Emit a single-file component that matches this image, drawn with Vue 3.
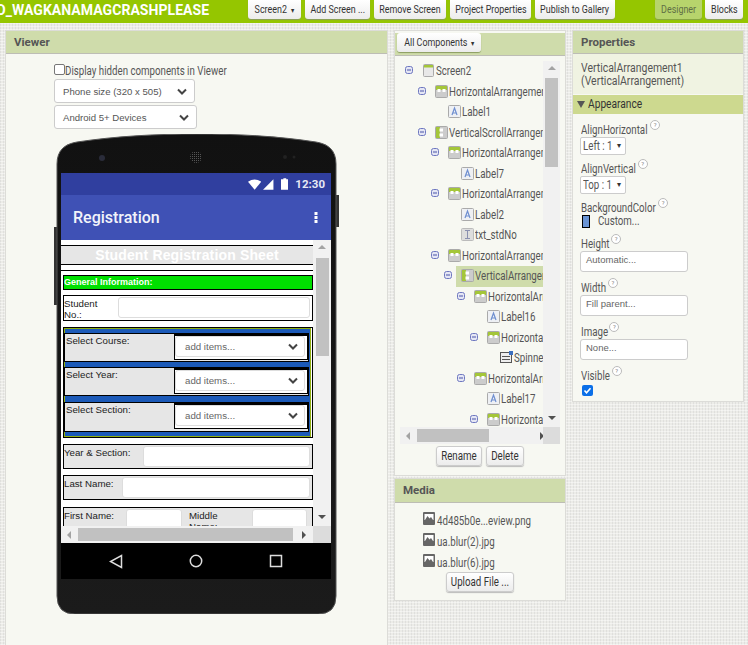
<script setup>
const tree = [
  { d: 0, i: 'screen', t: 'Screen2', m: true },
  { d: 1, i: 'h', t: 'HorizontalArrangement1', m: true },
  { d: 2, i: 'label', t: 'Label1' },
  { d: 1, i: 'v', t: 'VerticalScrollArrangement1', m: true },
  { d: 2, i: 'h', t: 'HorizontalArrangement2', m: true },
  { d: 3, i: 'label', t: 'Label7' },
  { d: 2, i: 'h', t: 'HorizontalArrangement3', m: true },
  { d: 3, i: 'label', t: 'Label2' },
  { d: 3, i: 'text', t: 'txt_stdNo' },
  { d: 2, i: 'h', t: 'HorizontalArrangement4', m: true },
  { d: 3, i: 'v', t: 'VerticalArrangement1', m: true, sel: true },
  { d: 4, i: 'h', t: 'HorizontalArrangement5', m: true },
  { d: 5, i: 'label', t: 'Label16' },
  { d: 5, i: 'h', t: 'HorizontalArrangement6', m: true },
  { d: 6, i: 'spin', t: 'Spinner1' },
  { d: 4, i: 'h', t: 'HorizontalArrangement7', m: true },
  { d: 5, i: 'label', t: 'Label17' },
  { d: 5, i: 'h', t: 'HorizontalArrangement8', m: true }
]
const selects = ['Select Course:', 'Select Year:', 'Select Section:']
const media = ['4d485b0e...eview.png', 'ua.blur(2).jpg', 'ua.blur(6).jpg']
const boxes = [
  { l: 'Height', v: 'Automatic...', w: 37 },
  { l: 'Width', v: 'Fill parent...', w: 33 },
  { l: 'Image', v: 'None...', w: 36 }
]
const rowIndent = (d) => ({ paddingLeft: 5 + 13 * d + 'px' })
const tuck = (w) => ({ marginRight: -Math.round(w * 0.19) + 'px' })
</script>

<template>
  <div class="page">
    <header class="topbar">
      <div class="title">O_WAGKANAMAGCRASHPLEASE</div>
      <div class="tools">
        <button class="tb w53"><span class="cc">Screen2 <span class="caret">▾</span></span></button>
        <button class="tb w64"><span class="cc">Add Screen ...</span></button>
        <button class="tb w73"><span class="cc">Remove Screen</span></button>
        <button class="tb w81"><span class="cc">Project Properties</span></button>
        <button class="tb w80"><span class="cc">Publish to Gallery</span></button>
      </div>
      <div class="modes">
        <button class="tb on w47"><span class="cc">Designer</span></button>
        <button class="tb w38"><span class="cc">Blocks</span></button>
      </div>
    </header>

    <main class="work">
      <section class="panel viewer">
        <div class="phead">Viewer</div>
        <div class="vbody">
          <label class="hidden-check"><span class="cb"></span><span class="cn">Display hidden components in Viewer</span></label>
          <div class="dd w141"><span>Phone size (320 x 505)</span><svg class="chev" viewBox="0 0 10 7"><path d="M1 1.500l4 4 4-4" /></svg></div>
          <div class="dd w143"><span>Android 5+ Devices</span><svg class="chev" viewBox="0 0 10 7"><path d="M1 1.500l4 4 4-4" /></svg></div>

          <div class="phone">
            <svg class="body" viewBox="0 0 285 480" width="285" height="480">
              <rect x="0" y="93" width="4" height="78" fill="#333" />
              <rect x="281" y="61" width="4" height="32" fill="#333" />
              <defs>
                <linearGradient id="ph" x1="0" y1="0" x2="0" y2="1">
                  <stop offset="0" stop-color="#111" />
                  <stop offset="1" stop-color="#1b1b1b" />
                </linearGradient>
                <pattern id="dots" width="2" height="2" patternUnits="userSpaceOnUse">
                  <rect width="1" height="1" fill="#555" />
                </pattern>
              </defs>
              <path d="M3 30C3 16 11 10 23 8C63 2 103 0 143 0C183 0 223 2 262 8C274 10 282 16 282 30L282 462Q282 480 264 480L21 480Q3 480 3 462Z" fill="url(#ph)" stroke="#555" stroke-width="1" />
              <circle cx="48" cy="24" r="3" fill="#2a2c3a" />
              <circle cx="142" cy="23" r="6" fill="url(#dots)" />
              <circle cx="231" cy="23" r="2" fill="#222" />
              <circle cx="240" cy="23" r="1.500" fill="#222" />
            </svg>
            <div class="screen">
              <div class="status">
                <svg width="14" height="11" viewBox="0 0 14 11"><path d="M0 2.500Q7-2 14 2.500L7 11Z" fill="#fff" /></svg>
                <svg class="sig" width="11" height="11" viewBox="0 0 11 11"><path d="M11 0V11H0Z" fill="#fff" /></svg>
                <svg class="bat" width="8" height="12" viewBox="0 0 8 12"><path d="M2.500 0h3v1H8v11H0V1h2.500Z" fill="#fff" /></svg>
                <span class="time">12:30</span>
              </div>
              <div class="toolbar">
                <span class="apptitle">Registration</span>
                <svg width="4" height="11" viewBox="0 0 4 11"><rect x=".5" y="0" width="3" height="3" fill="#fff" /><rect x=".5" y="4" width="3" height="3" fill="#fff" /><rect x=".5" y="8" width="3" height="3" fill="#fff" /></svg>
              </div>
              <div class="scrollarea">
                <div class="form">
                  <div class="sheet-title">Student Registration Sheet</div>
                  <div class="form-inner">
                    <div class="green">General Information:</div>
                    <div class="frow white student">
                      <span class="flabel sw">Student No.:</span>
                      <span class="inp grow"></span>
                    </div>
                    <div class="group">
                      <div class="group-in">
                        <div v-for="(s, i) in selects" :key="s" class="selrow" :class="'sr' + i">
                          <span class="flabel">{{ s }}</span>
                          <div class="spin">
                            <div class="spin-in">
                              <span>add items...</span>
                              <svg class="chev" viewBox="0 0 10 7"><path d="M1 1.500l4 4 4-4" /></svg>
                            </div>
                          </div>
                        </div>
                      </div>
                    </div>
                    <div class="frow">
                      <span class="flabel yw">Year &amp; Section:</span>
                      <span class="inp grow"></span>
                    </div>
                    <div class="frow">
                      <span class="flabel lw">Last Name:</span>
                      <span class="inp grow"></span>
                    </div>
                    <div class="frow last">
                      <span class="flabel fw">First Name:</span>
                      <span class="inp w56"></span>
                      <span class="flabel mw">Middle Name:</span>
                      <span class="inp w55"></span>
                    </div>
                  </div>
                </div>
                <div class="vs">
                  <span class="tri up"></span>
                  <span class="thumb"></span>
                  <span class="tri down"></span>
                </div>
              </div>
              <div class="hs">
                <div class="hs-track">
                  <span class="tri left"></span>
                  <span class="hthumb"></span>
                  <span class="tri right"></span>
                </div>
                <div class="corner"></div>
              </div>
              <div class="nav">
                <svg width="14" height="15" viewBox="0 0 14 15"><path d="M12.500 1.500V13.500L1.500 7.500Z" fill="none" stroke="#ddd" stroke-width="1.500" /></svg>
                <svg width="14" height="14" viewBox="0 0 14 14"><circle cx="7" cy="7" r="5.700" fill="none" stroke="#ddd" stroke-width="1.500" /></svg>
                <svg width="14" height="14" viewBox="0 0 14 14"><rect x="1.500" y="1.500" width="11" height="11" fill="none" stroke="#ddd" stroke-width="1.500" /></svg>
              </div>
            </div>
          </div>
        </div>
      </section>

      <div class="midcol">
        <section class="panel comps">
          <div class="phead compshead"><button class="tb allc"><span class="cc">All Components <span class="caret">▾</span></span></button></div>
          <div class="treewrap">
            <div class="treemain">
              <div class="tree">
                <div v-for="r in tree" :key="r.t + r.d" class="trow" :style="rowIndent(r.d)">
                  <span class="mslot">
                    <svg v-if="r.m" class="blk" width="8" height="8" viewBox="0 0 8 8"><rect x=".5" y=".5" width="7" height="7" rx="2" fill="#e4e6f4" stroke="#6f78c0" /><rect x="2" y="3.500" width="4" height="1" fill="#4b55a8" /></svg>
                  </span>
                  <span class="tcell" :class="{ sel: r.sel }">
                    <svg v-if="r.i === 'screen'" class="ico" width="13" height="13" viewBox="0 0 13 13"><rect x="1.500" y=".5" width="10" height="12" rx="1" fill="#e8e8e8" stroke="#aaa" /><rect x="2" y="1" width="9" height="2.500" fill="#a4c639" /></svg>
                    <svg v-else-if="r.i === 'h'" class="ico" width="13" height="13" viewBox="0 0 13 13"><rect x=".5" y=".5" width="12" height="12" rx="1" fill="#ccc" stroke="#aaa" /><rect x="1" y="1" width="11" height="4" fill="#a4c639" /><rect x="2.500" y="4" width="3" height="3" fill="#fff" /><rect x="7.500" y="4" width="3" height="3" fill="#fff" /></svg>
                    <svg v-else-if="r.i === 'v'" class="ico" width="13" height="13" viewBox="0 0 13 13"><rect x=".5" y=".5" width="12" height="12" rx="1" fill="#ccc" stroke="#aaa" /><rect x="1" y="1" width="4" height="11" fill="#a4c639" /><rect x="4.500" y="2.500" width="3.500" height="3" fill="#fff" /><rect x="4.500" y="7.500" width="3.500" height="3" fill="#fff" /></svg>
                    <svg v-else-if="r.i === 'label'" class="ico" width="13" height="13" viewBox="0 0 13 13"><rect x=".5" y=".5" width="12" height="12" rx="1" fill="#eef0f4" stroke="#aaa" /><path d="M4 10L6.500 3 9 10M5 8h3" fill="none" stroke="#6f8fd0" stroke-width="1.200" /></svg>
                    <svg v-else-if="r.i === 'text'" class="ico" width="13" height="13" viewBox="0 0 13 13"><rect x=".5" y=".5" width="12" height="12" rx="1" fill="#ddd" stroke="#bbb" /><path d="M4 2.500h5M4 10.500h5M6.500 2.500v8" fill="none" stroke="#8a90b0" /></svg>
                    <svg v-else class="ico" width="13" height="13" viewBox="0 0 13 13"><rect x=".5" y="1.500" width="11" height="10" fill="#eee" stroke="#555" /><rect x="9" y="0" width="4" height="4" fill="#3a6fc0" /><rect x="2" y="5" width="8" height="1" fill="#555" /><rect x="2" y="8" width="8" height="1" fill="#555" /></svg>
                    <span class="tlabel"><span class="cn">{{ r.t }}</span></span>
                  </span>
                </div>
              </div>
              <div class="vs small">
                <span class="tri up"></span>
                <span class="thumb tthumb"></span>
                <span class="tri down"></span>
              </div>
            </div>
            <div class="hs2">
              <span class="tri left"></span>
              <span class="hthumb t"></span>
              <span class="tri right"></span>
              <span class="corner2"></span>
            </div>
            <div class="tree-btns">
              <button class="tb2 rn"><span class="cc">Rename</span></button>
              <button class="tb2 dl"><span class="cc">Delete</span></button>
            </div>
          </div>
        </section>

        <section class="panel mediap">
          <div class="phead mh">Media</div>
          <div class="mlist">
            <div v-for="m in media" :key="m" class="mitem">
              <svg class="blk" width="12" height="13" viewBox="0 0 12 13"><rect width="12" height="13" rx="1" fill="#666" /><rect x="1.500" y="2" width="9" height="6" fill="#fff" /><path d="M2 8l2.500-4 2 2.500 1.500-1.500L10 8Z" fill="#666" /></svg>
              <span class="mtext"><span class="cn">{{ m }}</span></span>
            </div>
          </div>
          <div class="upload"><button class="tb2"><span class="cc">Upload File ...</span></button></div>
        </section>
      </div>

      <section class="panel props">
        <div class="phead">Properties</div>
        <div class="selname"><span class="cn wide">VerticalArrangement1</span><br /><span class="cn wide">(VerticalArrangement)</span></div>
        <div class="apphead"><span class="tri-d"></span><span class="cn app">Appearance</span></div>
        <div class="plist">
          <div class="plabel"><span class="cn" :style="tuck(81)">AlignHorizontal</span><span class="help">?</span></div>
          <div class="psel w46"><span class="cn">Left : 1</span><span class="caret">▾</span></div>
          <div class="plabel"><span class="cn" :style="tuck(68)">AlignVertical</span><span class="help">?</span></div>
          <div class="psel w46"><span class="cn">Top : 1</span><span class="caret">▾</span></div>
          <div class="plabel"><span class="cn" :style="tuck(92)">BackgroundColor</span><span class="help">?</span></div>
          <div class="swrow"><span class="swatch"></span><span class="cn">Custom...</span></div>
          <template v-for="b in boxes" :key="b.l">
            <div class="plabel bx"><span class="cn" :style="tuck(b.w)">{{ b.l }}</span><span class="help">?</span></div>
            <div class="pbox">{{ b.v }}</div>
          </template>
          <div class="plabel bx"><span class="cn" :style="tuck(37)">Visible</span><span class="help">?</span></div>
          <svg class="vis" width="11" height="11" viewBox="0 0 11 11"><rect width="11" height="11" rx="2" fill="#0b6fe8" /><path d="M2.500 5.500l2 2.200 4-4.500" fill="none" stroke="#fff" stroke-width="1.600" /></svg>
        </div>
      </section>
    </main>
  </div>
</template>

<style>
html, body { margin: 0; padding: 0; background: #ecece8; }
</style>

<style scoped>
.page {
  width: 748px; height: 645px; overflow: hidden; display: flex; flex-direction: column;
  font-family: Roboto, "Liberation Sans", sans-serif; color: #555;
  background-color: #ecece8;
  background-image: repeating-linear-gradient(0deg, rgba(255,255,255,.45) 0 1px, transparent 1px 3px), repeating-linear-gradient(90deg, rgba(200,200,200,.35) 0 1px, transparent 1px 3px);
}
button { font-family: inherit; margin: 0; cursor: default; }
.blk { display: block; }
.cn { display: inline-block; white-space: nowrap; transform: scaleX(.81); transform-origin: left center; }
.cn.wide { transform: scaleX(.87); }
.cn.app { transform: scaleX(.85); }
.cc { display: inline-block; flex: none; white-space: nowrap; transform: scaleX(.81); transform-origin: center; }
.topbar { height: 23px; flex: none; background: #95c600; display: flex; align-items: flex-start; overflow: hidden; }
.title { width: 252px; margin-left: -4px; flex: none; color: #fff; font: 700 14px/20px Roboto, sans-serif; white-space: nowrap; overflow: hidden; letter-spacing: .05px; }
.tools { display: flex; gap: 4px; }
.modes { display: flex; gap: 3px; margin-left: 40px; }
.tb {
  height: 19px; padding: 0 0 1px; border: 0; border-radius: 0 0 3px 3px; background: linear-gradient(#fff, #ececec);
  box-shadow: 0 1px 1px #8a9c60; color: #333; font-size: 11px; white-space: nowrap;
  display: inline-flex; align-items: center; justify-content: center;
}
.tb.on { background: #b7d46c; color: #5f6f45; box-shadow: 0 1px 1px #86a24a; }
.w53 { width: 53px; } .w64 { width: 65px; } .w73 { width: 72px; } .w81 { width: 81px; } .w80 { width: 80px; }
.w47 { width: 47px; } .w38 { width: 38px; }
.caret { font-size: 8px; margin-left: 2px; }

.work { flex: 1; min-height: 0; display: flex; align-items: flex-start; padding: 8px 0 0 6px; }
.panel { background: #f7f8f2; box-shadow: 0 0 0 1px #dcdcd8; }
.phead { height: 23px; background: #cfdcab; border-bottom: 1px solid #bdbdb5; color: #555; font: 700 11.500px/22px Roboto, sans-serif; padding-left: 8px; box-sizing: border-box; }
.viewer { width: 381px; height: 630px; flex: none; }
.vbody { padding: 9px 0 0 48px; }
.hidden-check { display: flex; align-items: center; height: 15px; font-size: 12px; color: #555; }
.cb { width: 9px; height: 9px; border: 1px solid #777; border-radius: 2px; background: #fff; flex: none; margin-top: -3px; }
.dd { height: 22px; margin-top: 1px; background: #fff; border: 1px solid #ccc; border-radius: 3px; display: flex; align-items: center; justify-content: space-between; padding: 0 7px 0 8px; box-sizing: content-box; font: 9.600px "Liberation Sans", sans-serif; color: #555; }
.dd + .dd { margin-top: 2px; }
.w141 { width: 124px; } .w143 { width: 126px; }
.chev { width: 10px; height: 7px; fill: none; stroke: #444; stroke-width: 2; flex: none; }

.phone { position: relative; width: 279px; height: 480px; margin: 5px 0 0 0; padding: 39px 0 0 7px; box-sizing: border-box; }
.body { position: absolute; left: 0; top: 0; }
.screen { position: relative; width: 270px; height: 406px; display: flex; flex-direction: column; background: #fff; }
.status { height: 22px; flex: none; background: #303f9f; display: flex; align-items: center; padding: 0 6px 0 187px; box-sizing: border-box; }
.sig { margin-left: 2px; } .bat { margin-left: 7px; }
.time { color: #e6e8f4; font: 700 11.500px Roboto, sans-serif; margin-left: 7px; }
.toolbar { height: 45px; flex: none; background: #3f51b5; display: flex; align-items: center; justify-content: space-between; padding: 0 13px 0 12px; box-sizing: border-box; }
.apptitle { color: #f2f3fa; font: 500 16px Roboto, sans-serif; }
.scrollarea { height: 286px; flex: none; display: flex; overflow: hidden; }
.form { width: 252px; padding-top: 5px; background: #fff; flex: none; font: 9.700px/12px "Liberation Sans", sans-serif; color: #222; box-sizing: border-box; }
.sheet-title { height: 20px; background: #e6e6e6; border-top: 1px solid #000; border-bottom: 1px solid #000; color: #fff; font: 700 14px/18px "Liberation Sans", sans-serif; text-align: center; letter-spacing: .15px; box-sizing: border-box; white-space: nowrap; }
.form-inner { margin-top: 5px; border-top: 1px solid #000; padding: 4px 0 0 2px; }
.green { height: 15px; background: #00e000; border: 1px solid #000; box-sizing: border-box; color: #fff; font: 700 9px/12px "Liberation Sans", sans-serif; padding-left: 0; }
.frow { height: 25px; margin-top: 6px; background: #e6e6e6; border: 1px solid #000; box-sizing: border-box; display: flex; align-items: flex-start; padding: 1px 2px 0 0; }
.frow.white { background: #fff; height: 26px; margin-top: 5px; }
.frow.last { height: 40px; margin-top: 7px; padding-right: 4px; }
.flabel { flex: none; line-height: 11px; box-sizing: border-box; }
.sw { width: 54px; padding-right: 16px; } .yw { width: 79px; margin-top: 1px; } .lw { width: 58px; margin-top: 1px; } .fw { width: 62px; margin-top: 1px; } .mw { width: 63px; margin-top: 1px; margin-left: 7px; padding-right: 20px; }
.student .flabel { margin-top: 1px; }
.inp { height: 21px; background: #fff; border: 1px solid #ddd; border-radius: 3px; box-sizing: border-box; display: block; }
.grow { flex: 1; }
.w56 { width: 56px; } .w55 { width: 55px; }
.group { height: 111px; margin-top: 6px; border: 1px solid #000; box-sizing: border-box; }
.group-in { height: 109px; border: 1px solid #8fae10; box-sizing: border-box; background: #1c5ab8; padding: 4px 0 0 0; margin: 0 1px 0 0; }
.selrow { height: 29px; width: 245px; margin-left: -1px; background: #e6e6e6; border: 1px solid #000; box-sizing: border-box; display: flex; justify-content: space-between; margin-bottom: 5px; padding-left: 1px; }
.sr0 .flabel, .sr1 .flabel, .sr2 .flabel { margin-top: 1px; }
.sr2 { height: 30px; margin-top: 6px; }
.spin { width: 134px; height: 26px; border: 1px solid #000; border-top-width: 2px; box-sizing: border-box; background: #fff; flex: none; padding-right: 2px; }
.spin-in { height: 21px; border: 1px solid #ddd; border-radius: 3px; box-sizing: border-box; display: flex; align-items: center; justify-content: space-between; padding: 0 6px 0 9px; color: #666; margin: 0; }
.vs { flex: none; width: 18px; background: #f1f1f1; position: relative; display: flex; flex-direction: column; align-items: center; }
.vs .thumb { display: block; width: 13px; height: 98px; background: #c1c1c1; margin-top: 9px; }
.tri { display: block; width: 0; height: 0; border-style: solid; flex: none; }
.tri.up { margin-top: 5px; border-width: 0 4px 4px; border-color: transparent transparent #a3a3a3; }
.tri.down { margin-top: auto; margin-bottom: 7px; border-width: 4px 4px 0; border-color: #505050 transparent transparent; }
.tri.left { border-width: 4px 4px 4px 0; border-color: transparent #a3a3a3 transparent transparent; }
.tri.right { border-width: 4px 0 4px 4px; border-color: transparent transparent transparent #505050; }
.hs { height: 17px; flex: none; display: flex; }
.hs-track { width: 252px; background: #f1f1f1; display: flex; align-items: center; padding-left: 6px; box-sizing: border-box; }
.hthumb { display: block; width: 215px; height: 13px; background: #c1c1c1; margin: 0 9px 0 7px; }
.corner { flex: 1; background: #dcdcdc; }
.nav { height: 36px; flex: none; background: #000; display: flex; align-items: center; padding: 0 0 0 48px; gap: 66px; box-sizing: border-box; }

.midcol { width: 170px; margin-left: 8px; flex: none; display: flex; flex-direction: column; gap: 4px; }
.comps { height: 444px; }
.compshead { padding-left: 2px; }
.allc { width: 84px; height: 19px; margin-top: 2px; border-radius: 3px; display: flex; }
.treewrap { padding: 5px 0 0 5px; }
.treemain { display: flex; width: 160px; height: 366px; }
.tree { width: 143px; overflow: hidden; flex: none; height: 366px; }
.trow { display: flex; align-items: flex-start; height: 20.500px; white-space: nowrap; box-sizing: border-box; }
.mslot { width: 17px; flex: none; height: 12px; padding-top: 5px; }
.tcell { display: flex; flex: none; height: 21px; align-items: flex-start; width: 300px; margin-right: -300px; }
.ico { flex: none; margin-top: 3px; }
.tlabel { font-size: 12px; color: #555; margin-left: 1px; padding-top: 3px; line-height: 14px; }
.tcell.sel { background: #cfdcab; box-shadow: -5px 0 0 #cfdcab; }
.vs.small { width: 17px; }
.vs .tthumb { height: 89px; margin-top: 8px; }
.hs2 { width: 160px; height: 17px; background: #f1f1f1; display: flex; align-items: center; padding-left: 6px; box-sizing: border-box; position: relative; }
.hthumb.t { width: 72px; margin: 0 51px 0 7px; }
.corner2 { position: absolute; right: 0; top: 0; width: 17px; height: 17px; background: #dcdcdc; }
.tree-btns { display: flex; gap: 4px; margin: 2px 0 0 36px; }
.tb2 { height: 20px; padding: 0; border: 1px solid #ccc; border-radius: 3px; background: linear-gradient(#fff, #ececec); box-shadow: 0 1px 1px #bbb; color: #333; font-size: 12px; white-space: nowrap; display: inline-flex; align-items: center; justify-content: center; }
.rn { width: 46px; } .dl { width: 38px; }
.mediap { height: 121px; }
.mh { height: 24px; }
.mlist { padding: 9px 0 0 28px; }
.mitem { display: flex; align-items: flex-start; height: 21px; font-size: 12px; }
.mtext { margin-left: 2px; padding-top: 2px; line-height: 14px; }
.upload { display: flex; justify-content: center; margin-top: -3px; }
.upload .tb2 { width: 68px; }

.props { width: 170px; height: 370px; margin-left: 8px; flex: none; }
.selname { height: 40px; background: #f0f3e2; padding: 8px 0 0 8px; box-sizing: border-box; font-size: 12px; line-height: 13px; color: #555; }
.apphead { height: 19px; margin-top: 1px; background: #cdd98f; color: #333; font-size: 12px; line-height: 19px; display: flex; align-items: center; padding-left: 4px; }
.tri-d { width: 0; height: 0; border-style: solid; border-width: 7px 4.500px 0; border-color: #555 transparent transparent; margin-right: 3px; flex: none; }
.plist { padding: 9px 0 0 8px; }
.plabel { font-size: 12px; line-height: 14px; color: #555; display: flex; position: relative; }
.plabel.bx { margin-top: 9px; }
.help { width: 8px; height: 8px; border: 1px solid #bbb; border-radius: 50%; font-size: 6px; line-height: 8px; text-align: center; margin: -3px 0 0 2px; background: #fff; color: #888; box-sizing: content-box; }
.psel { height: 18px; margin: 0 0 7px -1px; width: 46px; box-sizing: border-box; background: #fff; border: 1px solid #ccc; border-radius: 2px; font-size: 12px; line-height: 16px; padding-left: 2px; color: #555; white-space: nowrap; position: relative; }
.psel .caret { position: absolute; right: 4px; top: 0; color: #333; }
.swrow { display: flex; align-items: center; height: 14px; margin-top: -1px; padding-left: 1px; font-size: 12px; color: #555; }
.swatch { width: 6px; height: 11px; border: 1px solid #000; background: #6a94d4; margin-right: 8px; flex: none; }
.pbox { width: 108px; height: 21px; margin-left: -1px; background: #fff; border: 1px solid #ccc; border-radius: 3px; box-sizing: border-box; font: 9.500px/16px "Liberation Sans", sans-serif; color: #666; padding-left: 5px; }
.vis { display: block; margin: 2px 0 0 1px; }
</style>
